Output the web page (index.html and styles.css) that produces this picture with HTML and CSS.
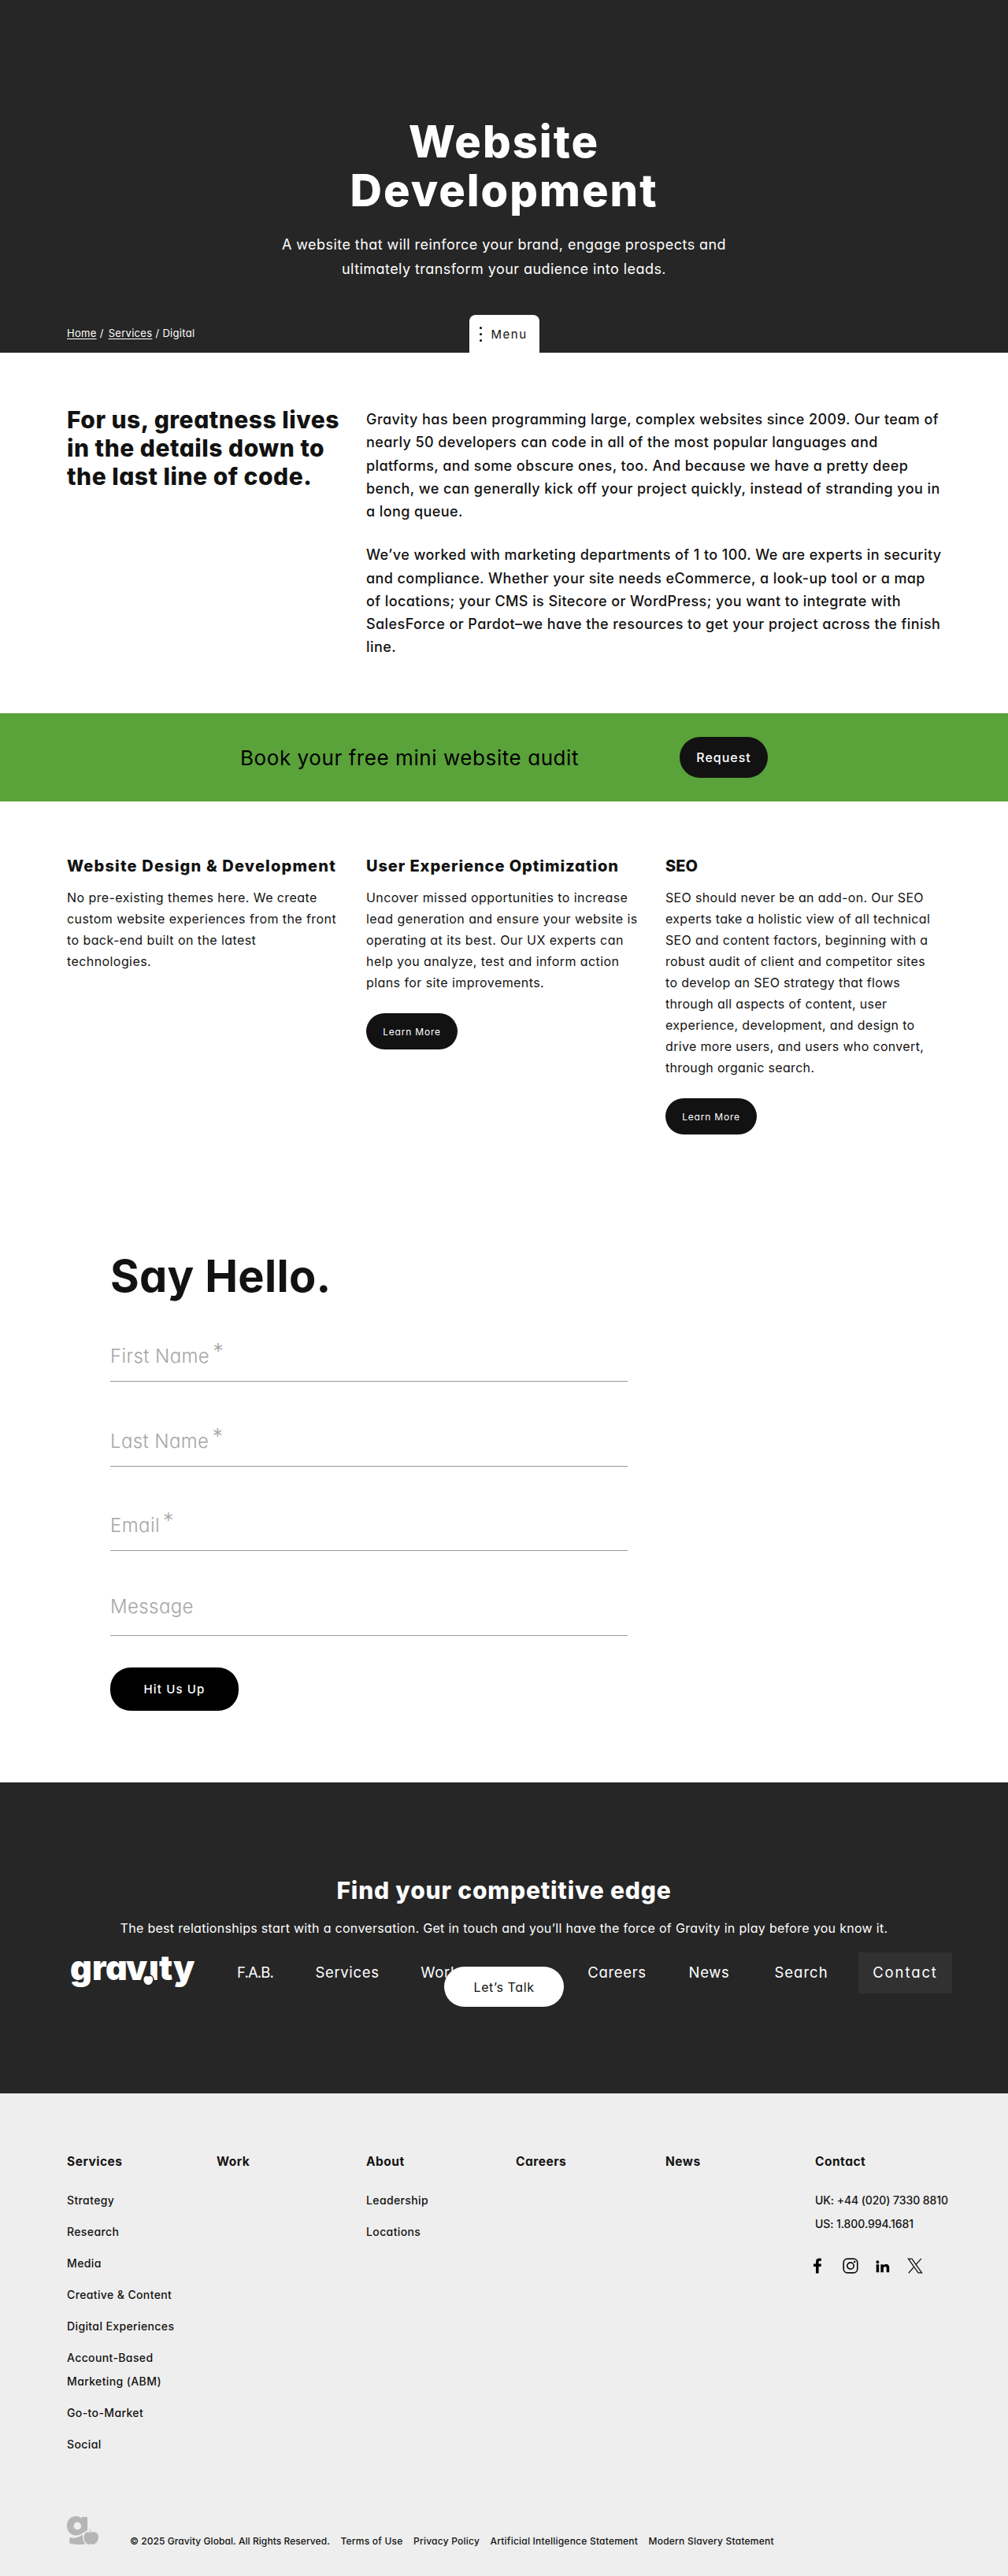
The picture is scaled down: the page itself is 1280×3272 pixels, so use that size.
FILE: index.html
```html
<!DOCTYPE html>
<html lang="en">
<head>
<meta charset="utf-8">
<title>Website Development | Gravity Global</title>
<link rel="stylesheet" href="styles.css">
</head>
<body>
<header class="hero">
  <h1>Website<br>Development</h1>
  <p class="lead">A website that will reinforce your brand, engage prospects and<br>ultimately transform your audience into leads.</p>
  <div class="hero-foot">
    <nav class="crumbs"><a href="#">Home</a><span>/</span><a class="second" href="#">Services</a><span>/</span><span>Digital</span></nav>
    <button class="menu-tab"><span class="dots"><i></i><i></i><i></i></span>Menu</button>
  </div>
</header>

<main>
  <section class="intro">
    <h2>For us, greatness lives<br>in the details down to<br>the last line of code.</h2>
    <div class="copy">
      <p>Gravity has been programming large, complex websites since 2009. Our team of<br>nearly 50 developers can code in all of the most popular languages and<br>platforms, and some obscure ones, too. And because we have a pretty deep<br>bench, we can generally kick off your project quickly, instead of stranding you in<br>a long queue.</p>
      <p>We’ve worked with marketing departments of 1 to 100. We are experts in security<br>and compliance. Whether your site needs eCommerce, a look-up tool or a map<br>of locations; your CMS is Sitecore or WordPress; you want to integrate with<br>SalesForce or Pardot–we have the resources to get your project across the finish<br>line.</p>
    </div>
  </section>

  <section class="banner">
    <p>Book your free mini website audit</p>
    <a class="pill request" href="#">Request</a>
  </section>

  <section class="services">
    <article>
      <h3 class="wide">Website Design &amp; Development</h3>
      <p>No pre-existing themes here. We create<br>custom website experiences from the front<br>to back-end built on the latest<br>technologies.</p>
    </article>
    <article>
      <h3>User Experience Optimization</h3>
      <p>Uncover missed opportunities to increase<br>lead generation and ensure your website is<br>operating at its best. Our UX experts can<br>help you analyze, test and inform action<br>plans for site improvements.</p>
      <a class="pill learn" href="#">Learn More</a>
    </article>
    <article class="seo">
      <h3>SEO</h3>
      <p>SEO should never be an add-on. Our SEO<br>experts take a holistic view of all technical<br>SEO and content factors, beginning with a<br>robust audit of client and competitor sites<br>to develop an SEO strategy that flows<br>through all aspects of content, user<br>experience, development, and design to<br>drive more users, and users who convert,<br>through organic search.</p>
      <a class="pill learn" href="#">Learn More</a>
    </article>
  </section>

  <section class="hello">
    <h2>Say Hello.</h2>
    <form>
      <div class="field">First Name<span class="req">*</span></div>
      <div class="field">Last Name<span class="req">*</span></div>
      <div class="field">Email<span class="req">*</span></div>
      <div class="field message">Message</div>
      <button class="pill submit" type="button">Hit Us Up</button>
    </form>
  </section>
</main>

<section class="edge">
  <h2>Find your competitive edge</h2>
  <p>The best relationships start with a conversation. Get in touch and you’ll have the force of Gravity in play before you know it.</p>
  <nav class="site-nav">
    <svg class="logo" width="165" height="52" viewBox="0 0 165 52">
      <text class="wordmark" x="4 32 49 75 104 117 135" y="34.7">gravıty</text>
      <circle class="halo" cx="103.3" cy="35" r="7.600"/>
      <path class="apple" d="M103.3 30.500c2.200-1.200 5.900-.6 5.900 3.800c0 3.600-2.600 6.800-5.900 6.800s-5.900-3.200-5.900-6.800c0-4.400 3.700-5 5.900-3.800z"/>
    </svg>
    <a class="n-fab" href="#">F.A.B.</a>
    <a class="n-services" href="#">Services</a>
    <a class="n-work" href="#">Work</a>
    <a class="n-about" href="#">About</a>
    <a class="n-careers" href="#">Careers</a>
    <a class="n-news" href="#">News</a>
    <a class="n-search" href="#">Search</a>
    <a class="n-contact" href="#">Contact</a>
  </nav>
  <a class="pill talk" href="#">Let’s Talk</a>
</section>

<footer class="footer">
  <div class="columns">
    <div>
      <h4>Services</h4>
      <ul><li>Strategy</li><li>Research</li><li>Media</li><li>Creative &amp; Content</li><li>Digital Experiences</li><li>Account-Based<br>Marketing (ABM)</li><li>Go-to-Market</li><li>Social</li></ul>
    </div>
    <div><h4>Work</h4></div>
    <div>
      <h4>About</h4>
      <ul><li>Leadership</li><li>Locations</li></ul>
    </div>
    <div><h4>Careers</h4></div>
    <div><h4>News</h4></div>
    <div>
      <h4>Contact</h4>
      <p class="phones">UK: +44 (020) 7330 8810<br>US: 1.800.994.1681</p>
      <div class="social">
        <svg width="11" height="20" viewBox="0 0 11 20"><path d="M3 19.500V11H0V7.500h3V5C3 1.800 4.800.5 7.300.5c1.200 0 2.300.1 2.700.2v3H8.200C6.900 3.700 6.600 4.400 6.600 5.400V7.500h3.300L9.500 11H6.600v8.500z"/></svg>
        <svg width="20" height="20" viewBox="0 0 20 20"><g fill="none" stroke="#121212" stroke-width="1.700"><rect x="1.200" y="1.200" width="17.600" height="17.600" rx="4.800"/><circle cx="10" cy="10" r="4.200"/></g><circle cx="15.200" cy="4.900" r="1.200"/></svg>
        <svg width="18" height="20" viewBox="0 0 18 20"><path d="M.7 8.300h3.500V18.300H.7zM2.400 3.200a2 2 0 1 1 0 4a2 2 0 0 1 0-4zM6.400 8.300h3.300v1.400c.6-1 1.700-1.700 3.300-1.700 3.400 0 4.200 2 4.200 4.900v5.400h-3.500v-4.800c0-1.300-.1-2.600-1.700-2.600s-2.100 1.200-2.100 2.500v4.900H6.400z"/></svg>
        <svg width="20" height="20" viewBox="0 0 20 20"><g fill="none" stroke="#121212" stroke-width="1.300"><path d="M1.500 1.200H6l12.500 17.600H14z"/><path d="M17.800.8L11 8.700M8.600 11.400L1.800 19.200"/></g></svg>
      </div>
    </div>
  </div>
  <div class="legal">
    <svg class="mark" width="41" height="36" viewBox="0 0 41 36">
      <path fill-rule="evenodd" d="M11.500 0c3 0 5.500 1.200 7.200 3.200V1H26v17l-7 4c-2 1.500-4.500 2.500-7.500 2.500C5 24.500 0 19 0 12S5 0 11.500 0zM13.300 7.500a4.800 4.900 0 1 0 0 9.800a4.800 4.900 0 0 0 0-9.800z"/>
      <path d="M3.600 27c5.400 1.600 11.400.4 15.900-3.500L24 35c-2 .7-4.500 1-7.600 1c-5.500 0-9.800-.6-13.400-1.800z"/>
      <path class="apple-mark" d="M30.500 21c3.500-1.700 9.500-1 9.500 5.500c0 5-4 9.500-7 9.500c-1.200 0-1.500-.4-2.600-.4s-1.500.4-2.600.4c-3 0-6.300-4.500-6.300-9.500c0-6.500 5.500-7.200 9-5.500z"/>
      <path class="leaf" d="M30.500 21c0-1.700-.7-3.200-2.200-4.500"/>
    </svg>
    <span class="copyright">© 2025 Gravity Global. All Rights Reserved.</span>
    <a href="#">Terms of Use</a>
    <a href="#">Privacy Policy</a>
    <a href="#">Artificial Intelligence Statement</a>
    <a href="#">Modern Slavery Statement</a>
  </div>
</footer>
</body>
</html>
```
FILE: styles.css
```css
* { box-sizing: border-box; margin: 0; padding: 0; }
body {
  font-family: Inter, "Open Sans", sans-serif;
  font-feature-settings: "cv11";
  color: #121212;
  background: #fff;
  white-space: nowrap;
}
a { color: inherit; text-decoration: none; }
ul { list-style: none; }
button { font: inherit; font-feature-settings: inherit; border: 0; color: inherit; }

.hero {
  height: 448px;
  padding-top: 149px;
  display: flex;
  flex-direction: column;
  text-align: center;
  background: #262626;
  color: #fff;
}
.hero h1 { font-size: 56px; line-height: 62px; font-weight: 800; letter-spacing: 2px; }
.lead { margin-top: 22px; font-size: 18px; line-height: 31px; letter-spacing: .44px; }
.hero-foot {
  margin-top: auto;
  padding: 0 85px;
  display: grid;
  grid-template-columns: 1fr 89px 1fr;
  align-items: end;
}
.crumbs {
  display: flex;
  gap: 4px;
  padding-bottom: 15px;
  font-size: 13px;
  line-height: 20px;
  letter-spacing: .3px;
}
.crumbs a { text-decoration: underline; text-underline-offset: 2px; }
.crumbs .second { margin-left: 2px; }
.menu-tab {
  height: 48px;
  padding: 1px 0 0 13px;
  display: flex;
  align-items: center;
  gap: 12px;
  background: #fff;
  color: #121212;
  border-radius: 8px 8px 0 0;
  font-size: 15px;
  letter-spacing: 1.500px;
}
.dots { display: flex; flex-direction: column; gap: 5px; }
.dots i { width: 3px; height: 3px; border-radius: 50%; background: #000; }

.intro {
  height: 458px;
  padding: 67px 85px 0;
  display: grid;
  grid-template-columns: 380px 1fr;
  align-items: start;
}
.intro h2 { font-size: 30px; line-height: 36px; font-weight: 800; letter-spacing: .5px; }
.copy {
  padding-top: 3px;
  display: grid;
  gap: 26px;
  font-size: 18px;
  line-height: 29.250px;
  font-weight: 500;
  letter-spacing: .42px;
}

.banner {
  height: 112px;
  padding-left: 305px;
  display: flex;
  align-items: center;
  gap: 130px;
  background: #5aa23a;
  color: #000;
}
.banner p { width: 428px; font-size: 26px; letter-spacing: .57px; }
.pill {
  display: flex;
  align-items: center;
  justify-content: center;
  border-radius: 26px;
  background: #121212;
  color: #fff;
}
.request { width: 112px; height: 52px; font-size: 16px; font-weight: 500; letter-spacing: 1px; }

.services {
  height: 493px;
  padding: 68px 85px 0;
  display: grid;
  grid-template-columns: repeat(3, 380px);
  align-items: start;
}
.services h3 { font-size: 20px; line-height: 28px; font-weight: 800; letter-spacing: .93px; }
.services .wide { letter-spacing: 1.170px; }
.services p { margin-top: 13px; font-size: 16px; line-height: 27px; letter-spacing: .42px; }
.services .seo p { letter-spacing: .33px; }
.services .seo h3 { letter-spacing: 0; }
.learn { width: 116px; height: 46px; margin-top: 25px; font-size: 12px; letter-spacing: .8px; }

.hello { height: 753px; padding: 82.500px 0 0 140px; }
.hello h2 { font-size: 56px; line-height: 54px; font-weight: 700; letter-spacing: .3px; }
.hello form { width: 657px; }
.field {
  height: 107.500px;
  padding-bottom: 11px;
  display: flex;
  align-items: flex-end;
  border-bottom: 1px solid #999;
  font-size: 24px;
  line-height: 40px;
  font-weight: 300;
  letter-spacing: .4px;
  color: #a5a5a5;
}
.message { padding-bottom: 16px; }
.req { margin-left: 4px; padding-bottom: 6px; font-size: 27px; }
.submit {
  width: 163px;
  height: 55px;
  margin-top: 40px;
  background: #000;
  font-size: 15px;
  font-weight: 500;
  letter-spacing: 1.170px;
}

.edge {
  position: relative;
  height: 395px;
  padding-top: 117px;
  background: #262626;
  color: #fff;
  text-align: center;
}
.edge h2 { font-size: 30px; line-height: 40px; font-weight: 800; letter-spacing: .82px; }
.edge p { margin-top: 15px; font-size: 16px; line-height: 27px; letter-spacing: .3px; }
.site-nav {
  height: 52px;
  margin-top: 17px;
  padding-left: 85px;
  display: flex;
  font-size: 18.500px;
  line-height: 51px;
  letter-spacing: .65px;
}
.logo { margin-right: 24px; overflow: visible; }
.wordmark { font-size: 43px; font-weight: 900; letter-spacing: 0; fill: #fff; }
.halo { fill: #262626; }
.apple { fill: #fff; }
.n-fab { width: 100px; letter-spacing: -.9px; }
.n-services { width: 134px; }
.n-work { width: 101px; }
.n-about { width: 110px; }
.n-careers { width: 129px; }
.n-news { width: 105px; }
.n-search { width: 126px; padding-left: 3px; letter-spacing: 1px; }
.n-contact { width: 119px; margin-left: 11px; background: #313131; letter-spacing: 1.900px; }
.talk {
  position: absolute;
  left: 564px;
  top: 234px;
  width: 152px;
  height: 51px;
  background: #fff;
  color: #121212;
  font-size: 16px;
  letter-spacing: .6px;
}

.footer { height: 613px; padding: 71px 0 0 85px; background: #eee; }
.columns { height: 466px; display: grid; grid-template-columns: repeat(6, 190px); }
.footer h4 { padding-top: 1px; font-size: 15.500px; line-height: 30px; font-weight: 700; letter-spacing: .5px; }
.footer ul, .phones { margin-top: 19px; font-size: 14px; line-height: 30px; font-weight: 500; letter-spacing: .38px; }
.footer ul { display: grid; gap: 10px; }
.phones { letter-spacing: -.08px; }
.social { margin: 28px 0 0 -2px; display: flex; gap: 22px; }
.social svg:first-child { margin-right: 4px; }
.legal {
  display: flex;
  gap: 13.500px;
  font-size: 12px;
  line-height: 20px;
  font-weight: 500;
  letter-spacing: .22px;
}
.legal a, .copyright { padding-top: 22px; }
.copyright { margin-left: 25.500px; letter-spacing: .07px; }
.mark { fill: #b5b5b5; }
.apple-mark { stroke: #eee; stroke-width: 3px; paint-order: stroke; }
.leaf { fill: none; stroke: #b5b5b5; }
```
